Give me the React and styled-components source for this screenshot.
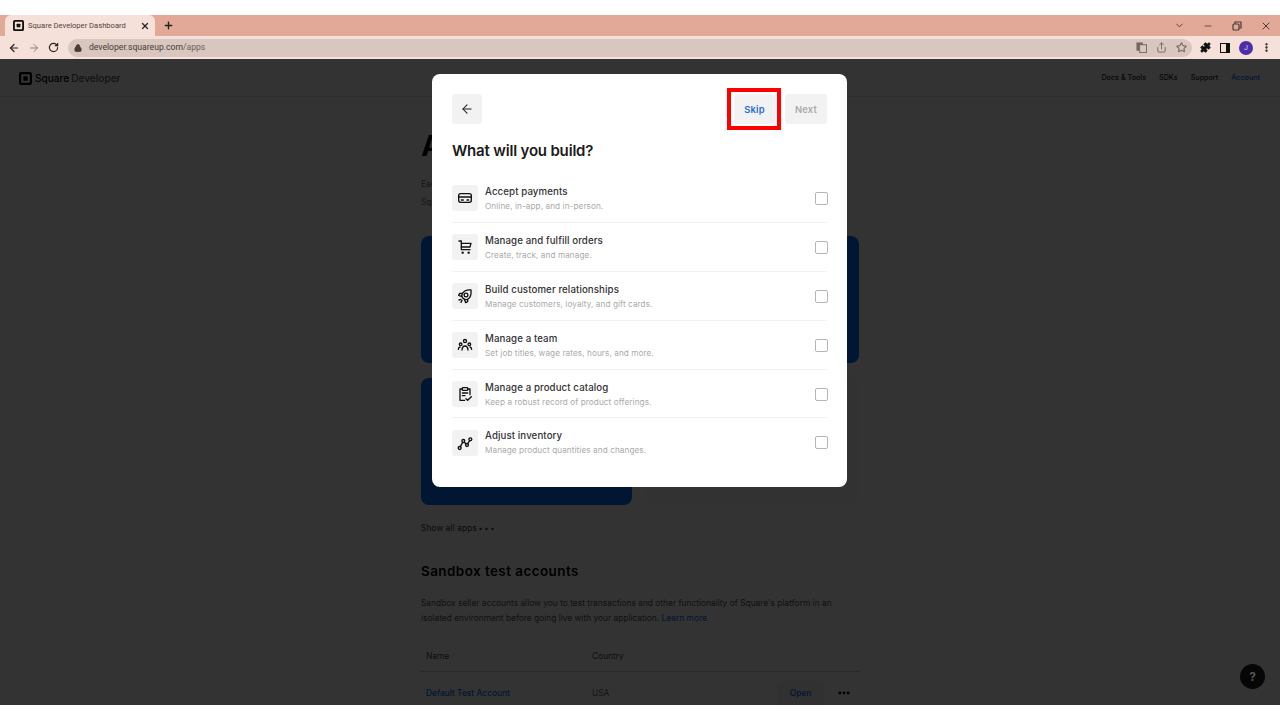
import React from "react";
import styled, { createGlobalStyle } from "styled-components";
import { ArrowLeft, ArrowRight, RotateCw, Lock, Share, Star, Puzzle, EllipsisVertical, ChevronDown, Minus, X, Plus, Ellipsis } from "lucide-react";

const Global = createGlobalStyle`
  html, body { margin: 0; padding: 0; background: #fff; }
  * { box-sizing: border-box; }
  body { font-family: Inter, "Liberation Sans", sans-serif; }
`;

const Frame = styled.div`
  width: 1280px; height: 720px; padding: 15px 0; display: flex; flex-direction: column; overflow: hidden; background: #fff;
`;
const TabStrip = styled.div`
  height: 21px; flex: none; background: #e2a999; display: flex; align-items: stretch; padding-left: 5px; color: #222;
`;
const Tab = styled.div`
  width: 150px; background: #f6e0da; border-radius: 6px 6px 0 0; display: flex; align-items: center; padding: 0 5px 0 8px;
`;
const Favicon = styled.svg`width: 11px; height: 11px; flex: none;`;
const TabTitle = styled.span`
  font: 7.6px/1 Roboto, sans-serif; color: #50423f; margin-left: 4px; flex: 1; white-space: nowrap;
`;
const NewTab = styled.div`width: 26px; display: flex; align-items: center; justify-content: center;`;
const WindowControls = styled.div`
  margin-left: auto; display: flex; align-items: center; gap: 18.5px; padding-right: 8px; color: #4a3c38;
`;
const Toolbar = styled.div`
  height: 23px; flex: none; background: #f6e0da; display: flex; align-items: center; padding: 0 8px 0 8px; color: #2b2523;
`;
const NavIcons = styled.div`display: flex; align-items: center; gap: 8px; width: 60px;`;
const UrlBar = styled.div`
  flex: 1; height: 18px; border-radius: 9px; background: #d8c6bf; display: flex; align-items: center; padding: 0 5.5px 0 6px; color: #4a3c38; margin-right: 8px;
`;
const UrlText = styled.span`
  font: 8.6px/1 Roboto, sans-serif; color: #463a37; margin-left: 7px; flex: 1;
  span { color: #6f605b; }
`;
const UrlIcons = styled.div`display: flex; align-items: center; gap: 9px; color: #75665f;`;
const ToolIcons = styled.div`display: flex; align-items: center; gap: 8px; color: #111;`;
const Avatar = styled.div`
  width: 14px; height: 14px; border-radius: 50%; background: #4c2ea8; color: #ddd; font: 7px/14px Roboto, sans-serif; text-align: center;
`;

const Viewport = styled.div`flex: 1; position: relative; overflow: hidden; background: #fff;`;
const TopNav = styled.div`
  height: 38px; display: flex; align-items: center; padding: 1px 20px 0 19px; border-bottom: 1px solid #e6e6e6;
`;
const Brand = styled.div`
  display: flex; align-items: center; gap: 3px; font: 500 10.1px/1 Inter, sans-serif; color: #000;
  span { color: #222; margin-left: -1px; opacity: .75; }
`;
const NavLinks = styled.nav`margin-left: auto; display: flex; gap: 13px;`;
const NavLink = styled.a`
  font: 500 7.2px/1 Inter, sans-serif; color: ${p => p.$active ? "#006aff" : "#222"};
`;
const Content = styled.main`width: 438px; margin-left: 421px; padding-top: 34px;`;
const PageTitle = styled.h1`margin: 0; font: 700 29px/30px Inter, sans-serif; color: #000;`;
const Lead = styled.p`
  margin: 14px 0 0; font: 400 8.4px/18px Inter, sans-serif; color: #666; white-space: nowrap; overflow: hidden;
`;
const Cards = styled.div`
  display: grid; grid-template-columns: 211px 213px; column-gap: 14px; row-gap: 15px; margin-top: 25px;
`;
const Card = styled.div`
  height: 127px; border-radius: 8px;
  background: ${p => p.$ghost ? "#fafafa" : "#006dff"};
  grid-column: ${p => p.$wide ? "1 / -1" : "auto"};
`;
const ShowAll = styled.div`margin-top: 18px; font: 400 8.4px/10px Inter, sans-serif; color: #333; letter-spacing: .01em;`;
const Dots = styled.span`font-size: 7px; margin-left: -1px;`;
const SectionTitle = styled.h2`margin: 27px 0 0; font: 600 13.4px/20px Inter, sans-serif; color: #000; letter-spacing: .035em;`;
const Para = styled.p`
  margin: 15px 0 0; font: 400 8.4px/15px Inter, sans-serif; color: #555; white-space: nowrap;
  a { color: #006aff; }
`;
const TableHead = styled.div`
  margin-top: 16px; height: 30px; display: grid; grid-template-columns: 166px 1fr; padding-left: 5px; align-items: center;
  border-bottom: 1px solid #ccc; font: 400 8.4px/1 Inter, sans-serif; color: #444;
`;
const TableRow = styled.div`
  height: 42px; display: grid; grid-template-columns: 166px 1fr auto; padding-left: 5px; align-items: center; font: 400 8.4px/1 Inter, sans-serif; color: #666;
`;
const AccountLink = styled.a`font-weight: 500; color: #006aff;`;
const RowActions = styled.div`display: flex; align-items: center; gap: 13px; padding-right: 8px; color: #000;`;
const OpenBtn = styled.div`
  width: 47px; height: 24px; border-radius: 4px; background: #f2f2f2; color: #006aff; font-weight: 500; display: flex; align-items: center; justify-content: center;
`;
const Scrim = styled.div`position: absolute; inset: 0; background: rgba(0,0,0,.8);`;
const Help = styled.div`
  position: absolute; right: 15px; bottom: 16px; width: 25px; height: 25px; border-radius: 50%; background: #060606; color: #555;
  display: flex; align-items: center; justify-content: center; font: 700 12px/1 Inter, sans-serif;
`;

const Modal = styled.section`
  position: absolute; left: 432px; top: 15px; width: 415px; height: 413px; background: #fff; border-radius: 8px; padding: 20px 20px 0;
`;
const ModalHeader = styled.div`display: flex; align-items: center; justify-content: space-between;`;
const IconBtn = styled.button`
  width: 30px; height: 30px; padding: 0; border: 0; border-radius: 3px; background: #f2f2f2; color: #1a1a1a; display: flex; align-items: center; justify-content: center;
`;
const Actions = styled.div`display: flex; align-items: center; gap: 10px;`;
const Highlight = styled.div`
  position: relative; display: flex;
  &::after { content: ""; position: absolute; inset: -6px -6px -6px -7px; border: 4px solid #ff0000; pointer-events: none; }
`;
const TextBtn = styled.button`
  width: ${p => p.$w}px; height: 30px; padding: 1px 0 0; border: 0; border-radius: 3px; background: #f2f2f2;
  font: 600 9.4px/1 Inter, sans-serif; letter-spacing: .02em; color: ${p => p.$muted ? "#aaa" : "#1f6bd8"};
`;
const ModalTitle = styled.h2`margin: 18px 0 0; font: 600 15px/18px Inter, sans-serif; color: #1a1a1a; letter-spacing: -.012em;`;
const List = styled.div`margin-top: 14px;`;
const Row = styled.div`
  height: 48.9px; display: flex; align-items: center; padding-top: 1px; border-bottom: 1px solid ${p => p.$last ? "transparent" : "#f2f2f2"};
`;
const RowIcon = styled.div`
  width: 26px; height: 26px; flex: none; border-radius: 3px; background: #f2f2f2; display: flex; align-items: center; justify-content: center; color: #111;
`;
const RowText = styled.div`margin-left: 7px; flex: 1; display: flex; flex-direction: column; gap: 4px;`;
const RowTitle = styled.div`font: 500 9.7px/11px Inter, sans-serif; color: #333; letter-spacing: .01em;`;
const RowSub = styled.div`font: 400 8.2px/10px Inter, sans-serif; color: #aaa; letter-spacing: .01em;`;
const Check = styled.div`width: 13px; height: 13px; margin-right: -1px; border: 1.5px solid #b5b5b5; border-radius: 2px; flex: none;`;

const Ico = ({ children }) => (
  <svg width="16" height="16" viewBox="0 0 24 24" fill="none" stroke="currentColor" strokeWidth="2" strokeLinecap="round" strokeLinejoin="round">{children}</svg>
);
const SquareLogo = ({ size = 11, color = "#111" }) => (
  <Favicon style={{ width: size, height: size }} viewBox="0 0 24 24">
    <path fillRule="evenodd" fill={color} d="M4 0h16a4 4 0 0 1 4 4v16a4 4 0 0 1-4 4H4a4 4 0 0 1-4-4V4a4 4 0 0 1 4-4zm1 4a1 1 0 0 0-1 1v14a1 1 0 0 0 1 1h14a1 1 0 0 0 1-1V5a1 1 0 0 0-1-1z" />
    <rect x="8" y="8" width="8" height="8" rx="1" fill={color} />
  </Favicon>
);

const items = [
  { t: "Accept payments", s: "Online, in-app, and in-person.", i: <Ico><rect x="2.500" y="5.500" width="19" height="13" rx="3" /><path d="M2.500 10.500h19" strokeWidth="2.500" /><path d="M6.500 15h3M15 15h2.500" /></Ico> },
  { t: "Manage and fulfill orders", s: "Create, track, and manage.", i: <Ico><path d="M3 3h3.500v13h13" /><path d="M6.500 6.500H21l-1.500 5.500h-13" /><circle cx="8.500" cy="20.500" r="0.800" /><circle cx="17.500" cy="20.500" r="0.800" /></Ico> },
  { t: "Build customer relationships", s: "Manage customers, loyalty, and gift cards.", i: <Ico><path d="M21 3c-5-.5-10 .5-13 5.500-1.500 2.500-1 5 1 7s5 2.500 7.500 1C21 14 21.500 8 21 3z" /><circle cx="13.500" cy="10.500" r="2.800" /><path d="M7.500 8H4L2.500 11l4 1.500M16 17v3.500l-3 1.500-1.500-4" /><path d="M6 17l-3 1M7.500 18.500L6 21.500" /></Ico> },
  { t: "Manage a team", s: "Set job titles, wage rates, hours, and more.", i: <Ico><circle cx="12" cy="6" r="2.300" /><circle cx="5.500" cy="11" r="2" /><circle cx="18.500" cy="11" r="2" /><path d="M7.500 19.500c.3-3.500 2-6 4.500-6s4.200 2.500 4.500 6" /><path d="M2 18.500c.2-1.800 1-3 2.500-3.500M22 18.500c-.2-1.800-1-3-2.500-3.500" /></Ico> },
  { t: "Manage a product catalog", s: "Keep a robust record of product offerings.", i: <Ico><path d="M8 4.500H4.500V21.500h7" /><path d="M16 4.500h3.500V13" /><rect x="8" y="2.500" width="8" height="4" rx="1" /><path d="M8 10.500h8M8 14.500h4" /><path d="M13.500 19l2.500 2.500 5.500-5.500" /></Ico> },
  { t: "Adjust inventory", s: "Manage product quantities and changes.", i: <Ico><circle cx="4" cy="19.500" r="2.200" /><circle cx="9.500" cy="9" r="2.200" /><circle cx="15" cy="15" r="2.200" /><circle cx="20" cy="6.500" r="2.200" /><path d="M5 17.500l3.500-6.500M11 11l2.500 2.500M16 13l3-4.500" /></Ico> },
];

export default function App() {
  return (
    <Frame>
      <Global />
      <TabStrip>
        <Tab>
          <SquareLogo />
          <TabTitle>Square Developer Dashboard</TabTitle>
          <X size={10} strokeWidth={3} />
        </Tab>
        <NewTab><Plus size={11} strokeWidth={3} /></NewTab>
        <WindowControls>
          <ChevronDown size={11} />
          <Minus size={10} />
          <svg width="10" height="10" viewBox="0 0 10 10" fill="none" stroke="currentColor" strokeWidth="1.200"><rect x="1" y="3" width="6" height="6" rx="1" /><path d="M3 3V1h6v6H7" /></svg>
          <X size={12} />
        </WindowControls>
      </TabStrip>
      <Toolbar>
        <NavIcons>
          <ArrowLeft size={12} strokeWidth={2.4} />
          <ArrowRight size={12} color="#8d807b" />
          <RotateCw size={11} strokeWidth={2.6} />
        </NavIcons>
        <UrlBar>
          <Lock size={8} strokeWidth={3} fill="currentColor" />
          <UrlText>developer.squareup.com<span>/apps</span></UrlText>
          <UrlIcons>
            <svg width="11" height="11" viewBox="0 0 12 12"><rect x="0.500" y="0.500" width="7" height="9" fill="#75665f" /><rect x="4" y="3" width="7.500" height="8.500" fill="#d8c6bf" stroke="#75665f" /></svg>
            <Share size={11} />
            <Star size={11} strokeWidth={2.4} />
          </UrlIcons>
        </UrlBar>
        <ToolIcons>
          <Puzzle size={11} fill="currentColor" />
          <svg width="12" height="12" viewBox="0 0 12 12"><path fillRule="evenodd" d="M1 1h10v10H1zM2 2v8h5V2z" fill="currentColor" /></svg>
          <Avatar>J</Avatar>
          <EllipsisVertical size={11} strokeWidth={3} />
        </ToolIcons>
      </Toolbar>
      <Viewport>
        <TopNav>
          <Brand><SquareLogo size={13} color="#000" /> Square <span>Developer</span></Brand>
          <NavLinks>
            <NavLink>Docs &amp; Tools</NavLink>
            <NavLink>SDKs</NavLink>
            <NavLink>Support</NavLink>
            <NavLink $active>Account</NavLink>
          </NavLinks>
        </TopNav>
        <Content>
          <PageTitle>Apps</PageTitle>
          <Lead>Each application you create has its own credentials and settings for your integration.<br />Square apps connect your code to the Square platform.</Lead>
          <Cards>
            <Card $wide />
            <Card />
            <Card $ghost />
          </Cards>
          <ShowAll>Show all apps <Dots>• • •</Dots></ShowAll>
          <SectionTitle>Sandbox test accounts</SectionTitle>
          <Para>Sandbox seller accounts allow you to test transactions and other functionality of Square's platform in an<br />isolated environment before going live with your application. <a>Learn more</a></Para>
          <TableHead><span>Name</span><span>Country</span></TableHead>
          <TableRow>
            <AccountLink>Default Test Account</AccountLink>
            <span>USA</span>
            <RowActions><OpenBtn>Open</OpenBtn><Ellipsis size={14} strokeWidth={3} /></RowActions>
          </TableRow>
        </Content>
        <Scrim />
        <Help>?</Help>
        <Modal>
          <ModalHeader>
            <IconBtn><ArrowLeft size={14} strokeWidth={1.800} /></IconBtn>
            <Actions>
              <Highlight><TextBtn $w={41}>Skip</TextBtn></Highlight>
              <TextBtn $w={42} $muted>Next</TextBtn>
            </Actions>
          </ModalHeader>
          <ModalTitle>What will you build?</ModalTitle>
          <List>
            {items.map((it, i) => (
              <Row key={it.t} $last={i === items.length - 1}>
                <RowIcon>{it.i}</RowIcon>
                <RowText><RowTitle>{it.t}</RowTitle><RowSub>{it.s}</RowSub></RowText>
                <Check />
              </Row>
            ))}
          </List>
        </Modal>
      </Viewport>
    </Frame>
  );
}
